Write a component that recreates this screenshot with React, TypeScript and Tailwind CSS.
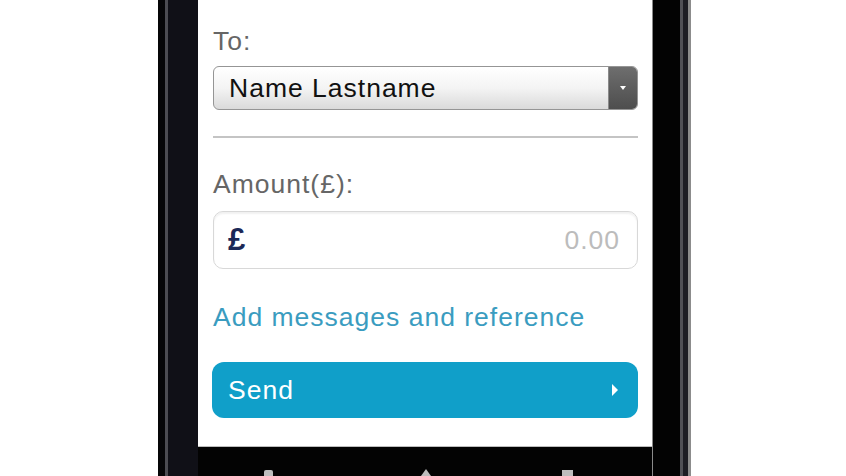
import React from "react";

export default function App() {
  const font = { fontFamily: '"Liberation Sans", Arial, sans-serif' };
  return (
    <div className="w-[846px] h-[476px] bg-white overflow-hidden flex" style={font}>
      <div className="ml-[158px] h-full flex">
        {/* left frame */}
        <div className="w-[7px] h-full bg-[#060608]" />
        <div className="w-[3px] h-full bg-[#4c4c52]" />
        <div className="w-[30px] h-full bg-[#101017]" />
        {/* center */}
        <div className="w-[454px] h-full flex flex-col bg-[#030303]">
          <div className="h-[447px] bg-white border-b border-[#bdbdbd] flex flex-col px-[15px] pr-[14px] pt-[28px] tracking-[1px] text-[26.5px]">
            <div className="leading-[26px] h-[26px] text-[#666]">To:</div>
            <div className="mt-[12px] h-[44px] flex rounded-[6px] border border-[#959595] bg-gradient-to-b from-white via-[#f4f4f4] to-[#dadada] overflow-hidden">
              <div className="flex-1 flex items-center pl-[15px] leading-[26px] text-[#111]">Name Lastname</div>
              <div className="w-[29px] h-full bg-gradient-to-b from-[#6e6e6e] to-[#4e4e4e] flex items-center justify-center border-l border-[#8a8a8a]">
                <div className="w-0 h-0 border-l-[3px] border-r-[3px] border-t-[4px] border-l-transparent border-r-transparent border-t-white" />
              </div>
            </div>
            <div className="mt-[26px] h-[2px] bg-[#c4c4c4]" />
            <div className="mt-[33px] leading-[26px] h-[26px] text-[#666]">Amount(£):</div>
            <div className="mt-[14px] h-[58px] rounded-[10px] border border-[#d8d8d8] bg-white shadow-[inset_0_2px_2px_rgba(0,0,0,0.06)] flex items-center justify-between pl-[14px] pr-[17px]">
              <span className="text-[31px] font-bold text-[#1b2857] leading-[28px] tracking-normal">£</span>
              <span className="text-[#bcbcbc] leading-[26px]">0.00</span>
            </div>
            <div className="mt-[35px] leading-[26px] h-[26px] text-[#3a9cc0]">Add messages and reference</div>
            <div className="mt-[32px] h-[56px] rounded-[12px] bg-[#109fc9] flex items-center justify-between pl-[16px] pr-[20px] -ml-[1px]">
              <span className="text-white leading-[26px]">Send</span>
              <div className="w-0 h-0 border-t-[6px] border-b-[6px] border-l-[6px] border-t-transparent border-b-transparent border-l-white" />
            </div>
          </div>
          <div className="flex-1 relative">
            <div className="absolute left-[66px] top-[23px] w-[9px] h-[7px] bg-[#bdbdbd] rounded-t-[2px]" />
            <div className="absolute left-[223px] top-[22px] w-0 h-0 border-l-[5px] border-r-[5px] border-b-[7px] border-l-transparent border-r-transparent border-b-[#bdbdbd]" />
            <div className="absolute left-[364px] top-[23px] w-[11px] h-[7px] bg-[#bdbdbd]" />
          </div>
        </div>
        {/* right frame */}
        <div className="w-[1px] h-full bg-[#8a8a8a]" />
        <div className="w-[27px] h-full bg-[#030303]" />
        <div className="w-[3px] h-full bg-[#505056]" />
        <div className="w-[5px] h-full bg-[#1d1d24]" />
        <div className="w-[3px] h-full bg-[#8c8c8c]" />
      </div>
    </div>
  );
}
